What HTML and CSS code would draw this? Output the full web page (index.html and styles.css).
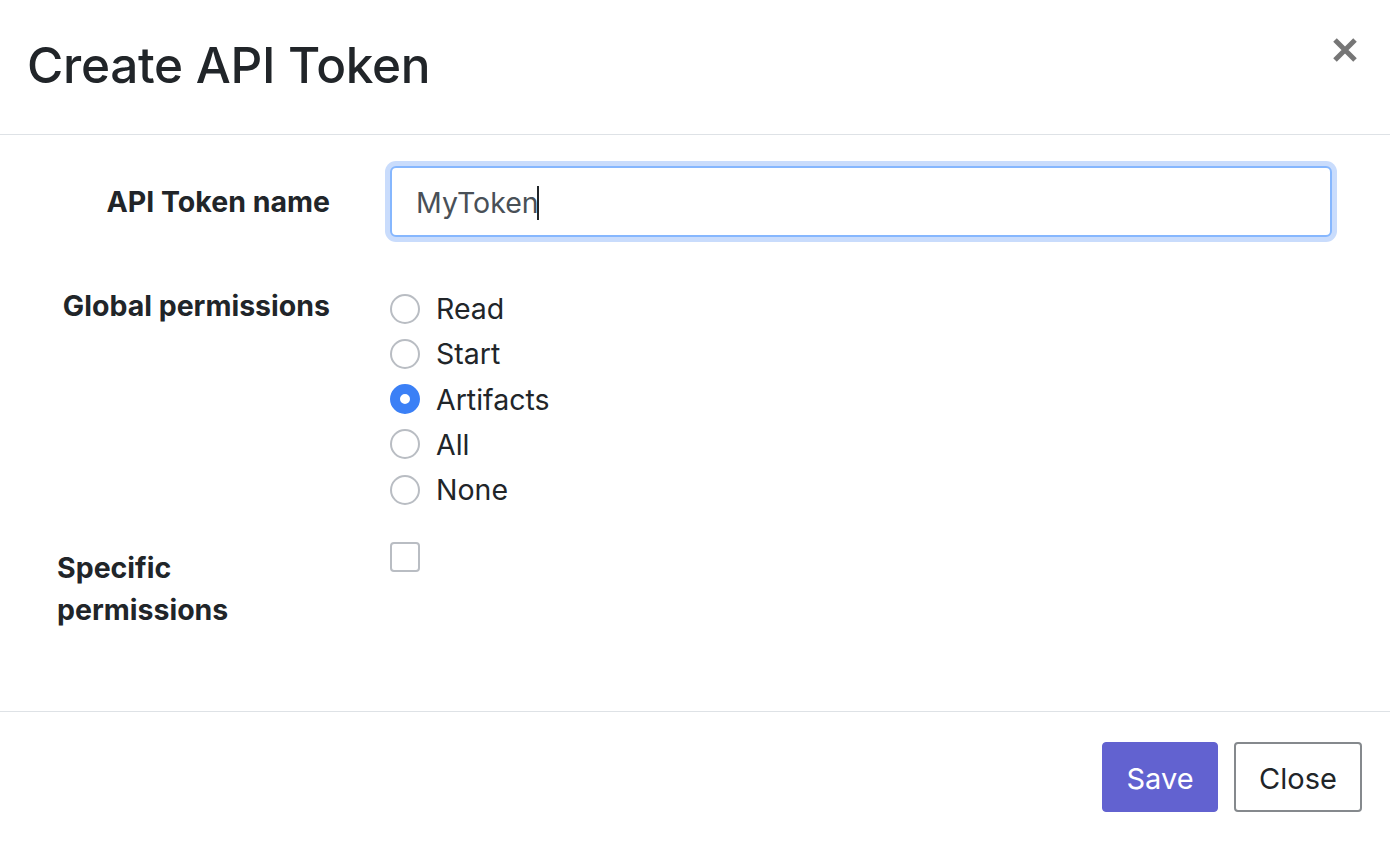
FILE: index.html
```html
<!DOCTYPE html>
<html>
<head>
<meta charset="utf-8">
<link rel="stylesheet" href="styles.css">
</head>
<body>
<div class="modal">
  <header class="modal-header">
    <h1 class="modal-title">Create API Token</h1>
    <button class="btn-close" aria-label="Close">
      <svg width="26" height="26" viewBox="0 0 26 26"><path d="M3 3 L23 23 M23 3 L3 23" stroke="#767676" stroke-width="5" stroke-linecap="butt"/></svg>
    </button>
  </header>
  <section class="modal-body">
    <div class="row row-name">
      <label class="label label-end">API Token name</label>
      <div class="field"><input class="input" type="text" value="MyToken"><span class="caret"></span></div>
    </div>
    <div class="row row-global">
      <label class="label label-end label-global">Global permissions</label>
      <div class="radios">
        <div class="check"><span class="radio"></span><span>Read</span></div>
        <div class="check"><span class="radio"></span><span>Start</span></div>
        <div class="check"><span class="radio checked"></span><span>Artifacts</span></div>
        <div class="check"><span class="radio"></span><span>All</span></div>
        <div class="check"><span class="radio"></span><span>None</span></div>
      </div>
    </div>
    <div class="row row-specific">
      <label class="label label-start">Specific permissions</label>
      <div><span class="checkbox"></span></div>
    </div>
  </section>
  <footer class="modal-footer">
    <button class="btn btn-primary">Save</button>
    <button class="btn btn-outline">Close</button>
  </footer>
</div>
</body>
</html>
```
FILE: styles.css
```css
html, body {
  margin: 0;
  padding: 0;
  background: #ffffff;
}
body {
  font-family: Inter, "Liberation Sans", sans-serif;
  color: #212529;
  width: 1390px;
  height: 842px;
  overflow: hidden;
}
.modal {
  display: flex;
  flex-direction: column;
  height: 842px;
}
.modal-header {
  height: 135px;
  border-bottom: 1px solid #dee2e6;
  display: flex;
  align-items: center;
  justify-content: space-between;
  padding: 0 32px 0 27px;
  box-sizing: border-box;
}
.modal-title {
  margin: 0;
  font-size: 49.5px;
  font-weight: 500;
  line-height: 1;
  padding-bottom: 2px;
  letter-spacing: -0.3px;
}
.btn-close {
  border: 0;
  background: transparent;
  padding: 0;
  width: 26px;
  height: 26px;
  align-self: flex-start;
  margin-top: 37px;
}
.btn-close svg { display: block; }
.modal-body {
  padding: 31px 58px 0 57px;
  height: 577px;
  box-sizing: border-box;
  border-bottom: 1px solid #dee2e6;
}
.row {
  display: grid;
  grid-template-columns: 273px 1fr;
  column-gap: 60px;
}
.label {
  font-size: 28.5px;
  font-weight: 700;
  line-height: 45px;
}
.label-end { text-align: right; }
.label-global { line-height: 40px; }
.label-start { text-align: left; line-height: 42px; padding-top: 5px; }
.row-name { align-items: center; }
.row-global { margin-top: 49px; }
.row-specific { margin-top: 30px; }
.field { position: relative; }
.input {
  display: block;
  box-sizing: border-box;
  width: 100%;
  height: 71px;
  border: 2px solid #86b7fe;
  border-radius: 6px;
  box-shadow: 0 0 0 5px #c9dcfc;
  outline: none;
  padding: 2px 24px 0;
  font-family: inherit;
  font-size: 28.5px;
  color: #495057;
}
.caret {
  position: absolute;
  left: 147px;
  top: 20px;
  width: 2px;
  height: 34px;
  background: #212529;
}
.radios { display: flex; flex-direction: column; }
.check {
  display: flex;
  align-items: center;
  gap: 16px;
  height: 45.25px;
  font-size: 28.5px;
}
.radio {
  width: 30px;
  height: 30px;
  box-sizing: border-box;
  border: 2px solid #b9bdc3;
  border-radius: 50%;
  flex: none;
}
.radio.checked {
  border: 10px solid #3b80f6;
  background: #ffffff;
}
.checkbox {
  display: block;
  width: 30px;
  height: 30px;
  box-sizing: border-box;
  border: 2px solid #b9bdc3;
  border-radius: 4px;
}
.modal-footer {
  flex: 1;
  display: flex;
  justify-content: flex-end;
  align-items: flex-start;
  gap: 16px;
  padding: 30px 28px 0 0;
}
.btn {
  height: 70px;
  font-family: inherit;
  font-size: 29px;
  border-radius: 4px;
  padding: 2px 0 0;
  cursor: pointer;
}
.btn-primary {
  width: 116px;
  background: #6262d0;
  color: #ffffff;
  border: 1px solid #6262d0;
}
.btn-outline {
  width: 128px;
  background: #ffffff;
  color: #212529;
  border: 2px solid #85898d;
}
```
